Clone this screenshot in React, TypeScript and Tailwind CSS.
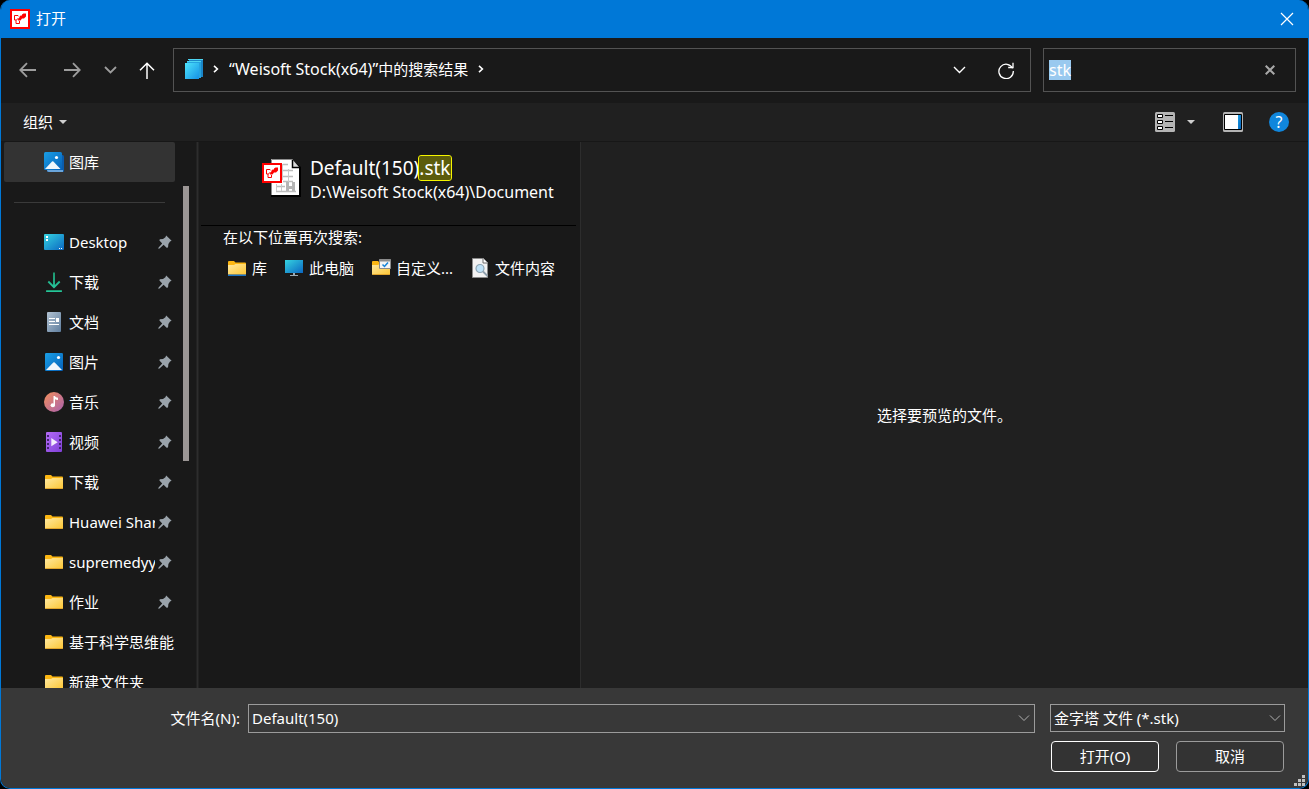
import React, { useEffect, useRef, useState } from 'react';

type IconName =
    | 'gallery'
    | 'desktop'
    | 'download'
    | 'document'
    | 'picture'
    | 'music'
    | 'video'
    | 'folder';

interface NavItem {
    id: number;
    label: string;
    icon: IconName;
    pinned: boolean;
}

const navItems: NavItem[] = [
    { id: 1, label: 'Desktop', icon: 'desktop', pinned: true },
    { id: 2, label: '下载', icon: 'download', pinned: true },
    { id: 3, label: '文档', icon: 'document', pinned: true },
    { id: 4, label: '图片', icon: 'picture', pinned: true },
    { id: 5, label: '音乐', icon: 'music', pinned: true },
    { id: 6, label: '视频', icon: 'video', pinned: true },
    { id: 7, label: '下载', icon: 'folder', pinned: true },
    { id: 8, label: 'Huawei Share', icon: 'folder', pinned: true },
    { id: 9, label: 'supremedyy', icon: 'folder', pinned: true },
    { id: 10, label: '作业', icon: 'folder', pinned: true },
    { id: 11, label: '基于科学思维能力', icon: 'folder', pinned: false },
    { id: 12, label: '新建文件夹', icon: 'folder', pinned: false },
];

// Shared gradients, referenced by id from the icons below
const Gradients: React.FC = () => (
    <svg width="0" height="0" className="absolute" aria-hidden="true">
        <defs>
            <linearGradient id="g-blue" x1="0" y1="0" x2="1" y2="1">
                <stop offset="0" stopColor="#1a9fe6" />
                <stop offset="1" stopColor="#0560b8" />
            </linearGradient>
            <linearGradient id="g-cyan" x1="0" y1="0" x2="1" y2="1">
                <stop offset="0" stopColor="#35d3e0" />
                <stop offset="1" stopColor="#0b67c2" />
            </linearGradient>
            <linearGradient id="g-stack" x1="0" y1="0" x2="1" y2="1">
                <stop offset="0" stopColor="#4ee4fb" />
                <stop offset="1" stopColor="#1591e6" />
            </linearGradient>
            <linearGradient id="g-green" x1="0" y1="0" x2="0" y2="1">
                <stop offset="0" stopColor="#1fa67a" />
                <stop offset="1" stopColor="#25c49a" />
            </linearGradient>
            <linearGradient id="g-slate" x1="0" y1="0" x2="1" y2="1">
                <stop offset="0" stopColor="#b3c3d3" />
                <stop offset="1" stopColor="#5f7e9e" />
            </linearGradient>
            <linearGradient id="g-music" x1="0" y1="0" x2="1" y2="1">
                <stop offset="0" stopColor="#f3905b" />
                <stop offset="1" stopColor="#a860b0" />
            </linearGradient>
            <linearGradient id="g-video" x1="0" y1="0" x2="1" y2="1">
                <stop offset="0" stopColor="#b36bf5" />
                <stop offset="1" stopColor="#8040d8" />
            </linearGradient>
            <linearGradient id="g-folder" x1="0" y1="0" x2="1" y2="1">
                <stop offset="0" stopColor="#ffe9a0" />
                <stop offset="1" stopColor="#fdc634" />
            </linearGradient>
        </defs>
    </svg>
);

const FolderShapes: React.FC = () => (
    <>
        <path d="M1 4a1 1 0 0 1 1-1h5l1.500 1.500H18a1 1 0 0 1 1 1V9H1z" fill="#fcb713" />
        <path d="M1 7h6l1.500-1H19v10a1 1 0 0 1-1 1H2a1 1 0 0 1-1-1z" fill="url(#g-folder)" />
        <path d="M1.500 16.500h17" stroke="#e2a52c" />
    </>
);

const NavIcon: React.FC<{ name: IconName }> = ({ name }) => (
    <svg width="20" height="20" viewBox="0 0 20 20" className="shrink-0" aria-hidden="true">
        {name === 'gallery' && (
            <>
                <rect x="3" y="3" width="17" height="17" rx="1.500" fill="#0b5cad" />
                <path d="M3 18h16v2H5a2 2 0 0 1-2-2z" fill="#6aa5db" />
                <rect width="18" height="18" rx="1.500" fill="url(#g-blue)" />
                <circle cx="12.500" cy="5.500" r="1.600" fill="#fff" />
                <path d="M1 17l7-7.500a1 1 0 0 1 1.400 0l7.100 7.500z" fill="#eff6fc" />
            </>
        )}
        {name === 'desktop' && (
            <>
                <rect y="2" width="20" height="16" rx="1" fill="url(#g-cyan)" />
                <path d="M2 4h2v2H2zM2 7h2v2H2zM15 16h1v1h-1zM17 16h1v1h-1z" fill="#fff" />
            </>
        )}
        {name === 'download' && (
            <g fill="none" stroke="url(#g-green)" strokeWidth="1.800">
                <path d="M10 .5V15M4.300 9.500L10 15.200l5.700-5.700" />
                <path d="M3 19h14v.1H3z" />
            </g>
        )}
        {name === 'document' && (
            <>
                <rect x="3" width="14" height="20" rx="1" fill="url(#g-slate)" />
                <path d="M5 6.500h6M5 9.500h6M5 12.500h10" stroke="#fff" />
                <path d="M12 6h3v4h-3z" fill="#fff" />
            </>
        )}
        {name === 'picture' && (
            <>
                <rect x="1" y="1" width="18" height="18" rx="1.200" fill="url(#g-blue)" />
                <circle cx="14.500" cy="5.500" r="1.600" fill="#fff" />
                <path d="M2 18l7.300-7.500a1 1 0 0 1 1.400 0L18 18z" fill="#eff6fc" />
            </>
        )}
        {name === 'music' && (
            <>
                <circle cx="10" cy="10" r="10" fill="url(#g-music)" />
                <ellipse cx="8.800" cy="13.300" rx="2.200" ry="2" fill="#fff" />
                <path d="M9.500 4h1.500c.3 1.500 1.500 1.500 3 1.700V8c-1.300 0-2.300-.3-3-.8v6.300H9.500z" fill="#fff" />
            </>
        )}
        {name === 'video' && (
            <>
                <rect x="2" width="16" height="20" rx="1" fill="url(#g-video)" />
                <path
                    d="M3 3h2v2H3zM3 7h2v2H3zM3 11h2v2H3zM3 15h2v2H3zM15 3h2v2h-2zM15 7h2v2h-2zM15 11h2v2h-2zM15 15h2v2h-2z"
                    fill="#43246f"
                />
                <path d="M7.300 6v8.300l6.300-4.100z" fill="#f4ecfd" />
            </>
        )}
        {name === 'folder' && <FolderShapes />}
    </svg>
);

const PinIcon: React.FC = () => (
    <svg width="14" height="14" viewBox="0 0 14 14" className="shrink-0" aria-hidden="true">
        <path
            d="M8.200.4L13.600 5.800 12 6.600 10.400 9 10 12.400 8.600 12.800 5.600 9.800 1.500 13.400.2 13.800.6 12.500 4.200 8.400 1.400 5.600 1.800 4.200 5 4 7.400 2.200z"
            fill="#9aa3ab"
        />
    </svg>
);

const LogoShapes: React.FC = () => (
    <>
        <path d="M0 0h20v20H0z" fill="#f00" />
        <path d="M2 2h16v16H2z" fill="#fff" />
        <path d="M9 7.500L8 6.500H4.500V11h2l2-2M6 11v3.500h3.500V12" fill="none" stroke="#f00" />
        <path d="M8 10.500l2.500-4H12V5.500L13.500 4.500H16V7.500L14 9.500h-2L10.500 11.500H8z" fill="#f00" />
    </>
);

const Chevron: React.FC<{ className?: string }> = ({ className }) => (
    <svg width="12" height="8" viewBox="0 0 12 8" fill="none" stroke="currentColor" className={className} aria-hidden="true">
        <path d="M1 1.500l5 5 5-5" />
    </svg>
);

const CrumbArrow: React.FC = () => (
    <svg width="6" height="8" viewBox="0 0 6 8" fill="none" stroke="#fff" strokeWidth="1.600" className="shrink-0" aria-hidden="true">
        <path d="M1 .8L4.400 4 1 7.200" />
    </svg>
);

const Triangle: React.FC = () => (
    <svg width="8" height="4" viewBox="0 0 8 4" className="shrink-0" aria-hidden="true">
        <path d="M0 0h8L4 4z" fill="#cfcfcf" />
    </svg>
);

const TitleBar: React.FC = () => (
    <header className="flex h-[38px] shrink-0 items-center bg-[#0078d7] pr-[13px] pl-[9px]">
        <svg width="20" height="20" viewBox="0 0 20 20" aria-hidden="true">
            <LogoShapes />
        </svg>
        <h1 className="ml-[6px] flex-1 pb-[2px] text-[15px]">打开</h1>
        <button aria-label="关闭" className="p-px">
            <svg width="14" height="14" viewBox="0 0 14 14" stroke="#fff" strokeWidth="1.200" aria-hidden="true">
                <path d="M1 1l12 12M13 1L1 13" />
            </svg>
        </button>
    </header>
);

const NavigationBar: React.FC = () => {
    const [query, setQuery] = useState('stk');
    const searchRef = useRef<HTMLInputElement>(null);

    // The search box opens with its whole query selected
    useEffect(() => {
        searchRef.current?.focus();
        searchRef.current?.select();
    }, []);

    return (
        <nav className="flex h-[65px] shrink-0 items-center gap-3 pr-3 pb-px pl-[18px]">
            <div className="flex w-[142px] shrink-0 items-center text-[#9d9d9d]">
                <button aria-label="后退" className="mr-7">
                    <svg width="17" height="16" viewBox="0 0 17 16" fill="none" stroke="currentColor" strokeWidth="1.800" aria-hidden="true">
                        <path d="M17 8H1.500M8 1.200L1.300 8 8 14.800" />
                    </svg>
                </button>
                <button aria-label="前进" className="mr-[23px]">
                    <svg width="17" height="16" viewBox="0 0 17 16" fill="none" stroke="currentColor" strokeWidth="1.800" aria-hidden="true">
                        <path d="M0 8h15.500M9 1.200L15.700 8 9 14.800" />
                    </svg>
                </button>
                <button aria-label="最近浏览的位置" className="mr-[22px]">
                    <svg width="13" height="8" viewBox="0 0 13 8" fill="none" stroke="currentColor" strokeWidth="1.800" aria-hidden="true">
                        <path d="M1 1l5.500 5.500L12 1" />
                    </svg>
                </button>
                <button aria-label="上移" className="text-white">
                    <svg width="16" height="17" viewBox="0 0 16 17" fill="none" stroke="currentColor" strokeWidth="1.500" aria-hidden="true">
                        <path d="M8 17V1.500M1 8.200L8 1.200l7 7" />
                    </svg>
                </button>
            </div>

            <div className="flex h-11 min-w-0 flex-1 items-center border border-[#535353] pr-4 pb-[2px] pl-[11px]">
                <svg width="18" height="20" viewBox="0 0 18 20" className="mr-[10px] shrink-0" aria-hidden="true">
                    <path d="M4 0h14v18H4z" fill="#1b86c8" />
                    <path d="M3 0h15v1H3z" fill="#4ed5f2" />
                    <path d="M2 2h14v17H2z" fill="#25a3e0" />
                    <path d="M2 2h14v1H2z" fill="#4ed5f2" />
                    <path d="M0 4h14v16H0z" fill="url(#g-stack)" />
                </svg>
                <CrumbArrow />
                <button className="mx-[10px] truncate text-[15px] leading-5">
                    <span className="text-base leading-5">“Weisoft Stock(x64)”</span>中的搜索结果
                </button>
                <CrumbArrow />
                <button aria-label="以前的位置" className="mt-[2px] mr-8 ml-auto">
                    <svg width="13" height="8" viewBox="0 0 13 8" fill="none" stroke="#fff" strokeWidth="1.400" aria-hidden="true">
                        <path d="M1 1l5.500 5.500L12 1" />
                    </svg>
                </button>
                <button aria-label="刷新" className="mt-[2px]">
                    <svg width="16" height="17" viewBox="0 0 16 17" fill="none" stroke="#fff" strokeWidth="1.300" aria-hidden="true">
                        <path d="M14.600 6.300A7.200 7.200 0 1 0 15.300 9" />
                        <path d="M15 .8V5.500h-4.800" />
                    </svg>
                </button>
            </div>

            <div className="flex h-11 w-[253px] shrink-0 items-center border border-[#535353] pr-5 pl-[5px]">
                <input
                    ref={searchRef}
                    aria-label="搜索"
                    value={query}
                    onChange={e => setQuery(e.target.value)}
                    className="h-5 min-w-0 flex-1 text-base leading-5 caret-transparent outline-none selection:bg-[#99c9ef] selection:text-white"
                />
                <button aria-label="清除" onClick={() => setQuery('')}>
                    <svg width="10" height="10" viewBox="0 0 10 10" stroke="#a8a8a8" strokeWidth="2" aria-hidden="true">
                        <path d="M.7.7l8.600 8.600M9.300.7L.7 9.300" />
                    </svg>
                </button>
            </div>
        </nav>
    );
};

const Toolbar: React.FC = () => (
    <div className="flex h-[39px] shrink-0 items-center border-b border-[#171717] bg-[#202020] pr-[19px] pl-[22px]">
        <button className="flex items-center gap-[6px] text-[15px]">
            组织
            <Triangle />
        </button>
        <button aria-label="更改视图" className="mr-3 ml-auto">
            <svg width="20" height="20" viewBox="0 0 20 20" aria-hidden="true">
                <rect width="20" height="20" rx="1.500" fill="#b4b4b4" />
                <g fill="#fff" stroke="#000">
                    <path d="M2.500 2.500h5v3h-5zM2.500 8.500h5v3h-5zM2.500 14.500h5v3h-5z" />
                    <path d="M10 3.500h8M10 9.500h8M10 15.500h8" />
                </g>
            </svg>
        </button>
        <button aria-label="更多选项" className="mr-7">
            <Triangle />
        </button>
        <button aria-label="预览窗格" className="mr-[26px]">
            <svg width="20" height="20" viewBox="0 0 20 20" aria-hidden="true">
                <rect width="20" height="20" rx="1.500" fill="#b4b4b4" />
                <path d="M1.500 2.500h17v15h-17z" fill="#fff" stroke="#000" />
                <path d="M15 3h3v14h-3z" fill="url(#g-blue)" />
            </svg>
        </button>
        <button
            aria-label="获取帮助"
            className="flex size-5 items-center justify-center rounded-full bg-[#1086dc] text-base leading-5"
        >
            ?
        </button>
    </div>
);

const Sidebar: React.FC = () => (
    <aside className="flex w-[200px] shrink-0 overflow-hidden pr-[2px] pl-[3px]">
        <div className="w-[171px] shrink-0">
            <button className="flex h-10 w-full items-center gap-[5px] rounded-xs bg-[#333333] pl-10 text-[15px]">
                <NavIcon name="gallery" />
                图库
            </button>
            <div className="flex h-10 items-center px-[10px]">
                <hr className="w-full border-[#3a3a3a]" />
            </div>
            <ul>
                {navItems.map(item => (
                    <li key={item.id}>
                        <button className="flex h-10 w-full items-center pl-10 text-left text-[15px]">
                            <NavIcon name={item.icon} />
                            <span className="ml-[5px] min-w-0 flex-1 overflow-hidden leading-6 whitespace-nowrap">
                                {item.label}
                            </span>
                            {item.pinned && (
                                <span className="mr-[3px] ml-[3px]">
                                    <PinIcon />
                                </span>
                            )}
                        </button>
                    </li>
                ))}
            </ul>
        </div>
        {/* Scroll thumb */}
        <div className="mt-11 ml-2 h-[275px] w-[6px] bg-[#9b9695]" />
        <div className="ml-auto w-[3px] border-x border-[#222222] bg-[#2d2d2d]" />
    </aside>
);

const FileIcon: React.FC = () => (
    <svg width="39" height="41" viewBox="0 0 39 41" className="shrink-0" aria-hidden="true">
        <path d="M9 5h22l8 6v30H9z" fill="#000" />
        <path d="M9 3h21v8h7v28H9z" fill="#fff" />
        <path d="M9.500 39V3.500H30" fill="none" stroke="#8d8d8d" />
        <path d="M30 3l7 8h-7z" fill="#d8d8d8" />
        <path d="M30.500 4v7.500H38" fill="none" stroke="#000" strokeWidth="1.500" />
        <path d="M21 8.500h5M21 14.500h10M21 20.500h10M21 25.500h10M14 30.500h9M14 35.500h20" stroke="#bdbdbd" strokeWidth="1.500" />
        <path d="M20.500 8v16M26.500 13v13M14.500 28v7M19.500 28v7" stroke="#c9c9c9" />
        <path d="M24 26h3v4h3v-4h3v9h-3v-2h-3v2h-3z" fill="#b5b5b5" />
        <svg y="7" width="20" height="20" viewBox="0 0 20 20">
            <LogoShapes />
        </svg>
    </svg>
);

const SearchResults: React.FC = () => (
    <main className="w-[379px] shrink-0 overflow-hidden">
        <div className="mr-1 flex h-[84px] border-b border-black pt-[14px] pl-[61px]">
            <FileIcon />
            <div className="ml-[9px] whitespace-nowrap">
                <div className="flex h-6 items-center text-[19px] leading-6">
                    Default(150)
                    <mark className="rounded-xs bg-[#5c5c0c] text-white outline outline-[#f5f500]">.stk</mark>
                </div>
                <div className="text-base leading-6">D:\Weisoft Stock(x64)\Document</div>
            </div>
        </div>
        <p className="pl-[22px] text-[15px] leading-[22px]">在以下位置再次搜索:</p>
        <div className="mt-2 flex items-center pl-[26px] text-[15px] leading-6 whitespace-nowrap">
            <button className="mr-[17px] flex items-center gap-[5px]">
                <svg width="20" height="20" viewBox="0 0 20 20" aria-hidden="true">
                    <FolderShapes />
                    <path d="M1 16.500h18v1.500H1z" fill="#1673c9" />
                </svg>
                库
            </button>
            <button className="mr-[17px] flex items-center gap-[5px]">
                <svg width="20" height="20" viewBox="0 0 20 20" aria-hidden="true">
                    <path d="M1 2h18v13H1z" fill="url(#g-cyan)" />
                    <path d="M9 15h2v2h3v1H6v-1h3z" fill="#9aa9b4" />
                </svg>
                此电脑
            </button>
            <button className="mr-[17px] flex items-center gap-[5px]">
                <svg width="20" height="20" viewBox="0 0 20 20" aria-hidden="true">
                    <FolderShapes />
                    <path d="M8.500 1.500h11v9h-11z" fill="#f4f4f4" stroke="#8b8b8b" />
                    <path d="M9 2h10v1.500H9z" fill="#8b8b8b" />
                    <path d="M11.500 6.500l2 2 3.500-4" fill="none" stroke="#1583d8" strokeWidth="1.500" />
                </svg>
                自定义...
            </button>
            <button className="flex items-center gap-[5px]">
                <svg width="20" height="20" viewBox="0 0 20 20" aria-hidden="true">
                    <path d="M2.500.5h11l4 4v15h-15z" fill="#f3f3f3" stroke="#8a8a8a" />
                    <path d="M13 .5V5h4.500" fill="#fff" stroke="#6d6d6d" />
                    <circle cx="10" cy="10.500" r="4" fill="#bfe2f8" stroke="#8fa6b5" strokeWidth="1.200" />
                    <path d="M13 13.500l4.500 4.500" stroke="#8fa0ad" strokeWidth="1.800" />
                </svg>
                文件内容
            </button>
        </div>
    </main>
);

const Footer: React.FC = () => {
    const [fileName, setFileName] = useState('Default(150)');

    return (
        <footer className="relative shrink-0 bg-[#383838] pt-4 pr-[23px] pb-4 text-[15px]">
            <div className="flex items-start">
                <label htmlFor="file-name" className="w-[239px] shrink-0 text-right leading-7">
                    文件名(N):
                </label>
                <div className="ml-2 flex h-[29px] min-w-0 flex-1 items-center border border-[#9b9b9b] pr-1 pb-px pl-[3px]">
                    <input
                        id="file-name"
                        value={fileName}
                        onChange={e => setFileName(e.target.value)}
                        className="min-w-0 flex-1 leading-6 outline-none"
                    />
                    <button aria-label="以前的文件名">
                        <Chevron className="text-[#b0b0b0]" />
                    </button>
                </div>
                <div className="relative ml-[15px] w-[235px] shrink-0">
                    <select
                        aria-label="文件类型"
                        className="h-7 w-full appearance-none border border-[#9b9b9b] bg-[#333333] pl-[3px] leading-6 outline-none"
                    >
                        <option>金字塔 文件 (*.stk)</option>
                    </select>
                    <Chevron className="pointer-events-none absolute top-[10px] right-1 text-[#b0b0b0]" />
                </div>
            </div>
            <div className="mt-2 flex justify-end gap-[17px] pr-px">
                <button className="h-[31px] w-[108px] rounded-sm border border-white bg-[#333333]">打开(O)</button>
                <button className="h-[31px] w-[108px] rounded-sm border border-[#9b9b9b] bg-[#333333]">取消</button>
            </div>
            {/* Resize grip */}
            <svg width="11" height="11" viewBox="0 0 11 11" className="absolute right-[3px] bottom-[2px]" aria-hidden="true">
                <path d="M8 0h3v3H8zM4 4h3v3H4zM8 4h3v3H8zM0 8h3v3H0zM4 8h3v3H4zM8 8h3v3H8z" fill="#bfbfbf" />
            </svg>
        </footer>
    );
};

export default function App() {
    return (
        <div
            lang="zh-CN"
            className="h-screen bg-black font-['Noto_Sans','Noto_Sans_CJK_SC',sans-serif] text-white"
        >
            <Gradients />
            <div className="flex h-full flex-col overflow-hidden rounded-[10px] border-x border-b border-[#0078d7] bg-[#191919]">
                <TitleBar />
                <NavigationBar />
                <Toolbar />
                <div className="flex min-h-0 flex-1">
                    <Sidebar />
                    <SearchResults />
                    <section className="flex min-w-0 flex-1 items-center justify-center border-l border-[#2d2d2d] bg-[#202020]">
                        <p className="text-[15px]">选择要预览的文件。</p>
                    </section>
                </div>
                <Footer />
            </div>
        </div>
    );
}
